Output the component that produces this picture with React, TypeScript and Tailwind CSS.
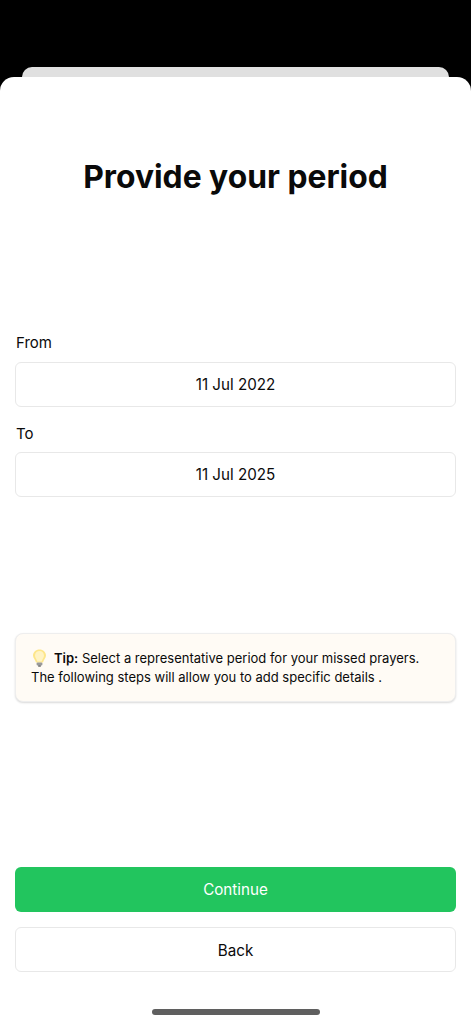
export default function App() {
  return (
    <div className="flex h-[1024px] w-[471px] flex-col overflow-hidden bg-black font-['Inter',sans-serif] text-[#0a0a0a]">
      {/* sheet behind */}
      <div className="mx-[22px] mt-[67px] h-[10px] shrink-0 rounded-t-[10px] bg-[#e0e0e0]" />

      {/* front sheet */}
      <div className="flex flex-1 flex-col rounded-t-[14px] bg-white px-[15px]">
        <h1 className="mt-[80px] text-center text-[31.8px] leading-[40px] font-bold">Provide your period</h1>

        <label className="mt-[136px] pl-px text-[15px] leading-[20px]">From</label>
        <div className="mt-[9px] flex h-[45px] items-center justify-center rounded-[6px] border border-[#e8e8e8] pt-[2px] text-[15.2px]">
          11 Jul 2022
        </div>
        <label className="mt-[17px] pl-px text-[15px] leading-[20px]">To</label>
        <div className="mt-[8px] flex h-[45px] items-center justify-center rounded-[6px] border border-[#e8e8e8] pt-[2px] text-[15.2px]">
          11 Jul 2025
        </div>

        <div className="mt-[136px] h-[69px] rounded-[8px] border border-[#eeeeee] bg-[#fffbf5] py-[15px] pl-[15px] text-[13px] leading-[18.5px] shadow-[0_1px_2px_rgba(0,0,0,0.15)]">
          <div className="flex items-center">
            <svg width="15" height="18" viewBox="0 0 15 18" className="mr-[7px] ml-[1px] shrink-0">
              <path d="M7.5 0.5C3.8 0.5 1 3.2 1 6.6c0 2.6 2.2 3.9 3 6.9h7c.8-3 3-4.3 3-6.9C14 3.2 11.2 .5 7.5 .5z" fill="#fde68a" />
              <path d="M7.5 2C5 2 3 4 3 6.4c0 2 1.6 3.4 2.3 6h4.4c.7-2.6 2.3-4 2.3-6C12 4 10 2 7.5 2z" fill="#fff3c4" />
              <rect x="4.6" y="13.4" width="5.8" height="3" rx="1" fill="#9a9a9a" />
              <rect x="6" y="16.2" width="3" height="1.5" rx="0.7" fill="#6b6b6b" />
            </svg>
            <p>
              <span className="font-semibold">Tip:</span> Select a representative period for your missed prayers.
            </p>
          </div>
          <p>The following steps will allow you to add specific details .</p>
        </div>

        <button className="mt-[165px] h-[45px] rounded-[6px] bg-[#22c55e] pt-px text-[15.2px] text-white">Continue</button>
        <button className="mt-[15px] h-[45px] rounded-[6px] border border-[#e8e8e8] bg-white pt-[3px] text-[15.2px]">Back</button>

        {/* home indicator */}
        <div className="mx-auto mt-[37px] h-[6px] w-[168px] rounded-full bg-[#5f5f5f]" />
      </div>
    </div>
  );
}
